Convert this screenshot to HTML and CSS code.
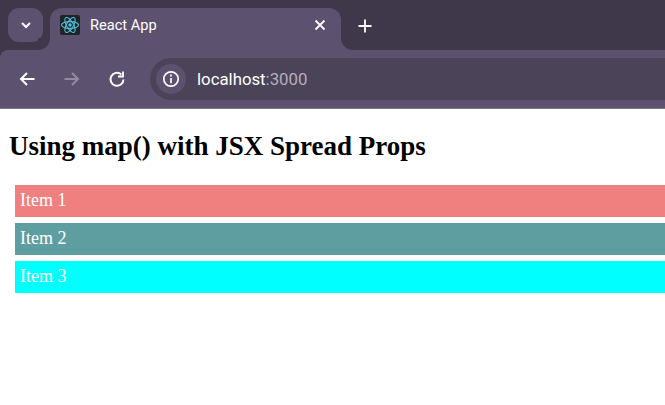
FILE: index.html
```html
<!DOCTYPE html>
<html lang="en">
<head>
    <meta charset="UTF-8">
    <title>React App</title>
    <link rel="stylesheet" href="styles.css">
</head>
<body>
    <div class="browser-top">
        <div class="tabstrip">
            <button class="tab-search">
                <svg width="12" height="12" viewBox="0 0 12 12"><path d="M2 4l4 4 4-4" fill="none" stroke="#fff" stroke-width="2"/></svg>
            </button>
            <div class="tab">
                <span class="favicon">
                    <svg width="20" height="20" viewBox="0 0 20 20" fill="none" stroke="#4fc3dc" stroke-width="1.1">
                        <ellipse cx="10" cy="10" rx="8.5" ry="3.4"/>
                        <ellipse cx="10" cy="10" rx="8.5" ry="3.4" transform="rotate(60 10 10)"/>
                        <ellipse cx="10" cy="10" rx="8.5" ry="3.4" transform="rotate(120 10 10)"/>
                        <circle cx="10" cy="10" r="1.7" fill="#4fc3dc" stroke="none"/>
                    </svg>
                </span>
                <span class="tab-title">React App</span>
                <svg class="tab-close" width="12" height="12" viewBox="0 0 12 12"><path d="M1.5 1.5l9 9M10.5 1.5l-9 9" stroke="#fff" stroke-width="1.8"/></svg>
            </div>
            <svg class="new-tab" width="14" height="14" viewBox="0 0 14 14"><path d="M7 0.5v13M0.5 7h13" stroke="#fff" stroke-width="1.8"/></svg>
        </div>
        <div class="toolbar">
            <svg class="nav-icon" width="18" height="18" viewBox="0 0 18 18" fill="none" stroke="#fff" stroke-width="2"><path d="M16.5 9H3M9 3L3 9l6 6"/></svg>
            <svg class="nav-icon" width="18" height="18" viewBox="0 0 18 18" fill="none" stroke="#948ba0" stroke-width="2"><path d="M1.5 9H15M9 3l6 6-6 6"/></svg>
            <svg class="nav-icon" width="18" height="18" viewBox="0 0 18 18" fill="none" stroke="#fff" stroke-width="2"><path d="M15.5 9.5A6.5 6.5 0 1 1 13.3 4.4"/><path d="M15 1.5v5h-5" stroke-width="1.8"/></svg>
            <div class="omnibox">
                <span class="site-info">
                    <svg width="18" height="18" viewBox="0 0 18 18" fill="none" stroke="#fff" stroke-width="1.7"><circle cx="9" cy="9" r="7.2"/><path d="M9 8v5.2"/><path d="M9 4.6v1.8"/></svg>
                </span>
                <span class="url">localhost<span class="port">:3000</span></span>
            </div>
        </div>
    </div>

    <div class="page">
        <h2>Using map() with JSX Spread Props</h2>
        <div class="item-list">
            <div class="item item-red">Item 1</div>
            <div class="item item-teal">Item 2</div>
            <div class="item item-cyan">Item 3</div>
        </div>
    </div>
</body>
</html>
```

FILE: styles.css
```css
html, body {
    margin: 0;
    height: 100%;
    overflow: hidden;
    background-color: #fff;
}
.browser-top {
    height: 109px;
    background-color: #3f374a;
    font-family: "Open Sans", Roboto, sans-serif;
    color: #fff;
}
.tabstrip {
    height: 50px;
    display: flex;
    align-items: flex-end;
    padding-left: 8px;
}
.tab-search {
    width: 35px;
    height: 34px;
    margin-bottom: 8px;
    border: none;
    border-radius: 11px;
    background-color: #5c516f;
    display: flex;
    align-items: center;
    justify-content: center;
    padding: 0;
}
.tab {
    position: relative;
    width: 291px;
    height: 42px;
    margin-left: 7px;
    padding: 0 15px 8px 10px;
    box-sizing: border-box;
    background-color: #5c516f;
    border-radius: 12px 12px 0 0;
    display: flex;
    align-items: center;
}
/* curved feet of the active tab */
.tab::before, .tab::after {
    content: "";
    position: absolute;
    bottom: 0;
    width: 12px;
    height: 12px;
}
.tab::before {
    left: -12px;
    background: radial-gradient(circle at 0 0, #3f374a 11.5px, #5c516f 12.5px);
}
.tab::after {
    right: -12px;
    background: radial-gradient(circle at 100% 0, #3f374a 11.5px, #5c516f 12.5px);
}
.favicon {
    width: 20px;
    height: 20px;
    background-color: #20232a;
    border-radius: 2px;
    display: flex;
}
.tab-title {
    flex: 1;
    margin-left: 10px;
    font-family: Roboto, sans-serif;
    font-size: 14.6px;
}
.new-tab {
    margin: 0 0 17px 17px;
    align-self: flex-end;
}
.toolbar {
    height: 59px;
    display: flex;
    align-items: center;
    padding: 0 0 1px 18px;
    background-color: #5c516f;
    border-bottom: 1px solid #7d7390;
    border-top-left-radius: 8px;
    box-sizing: border-box;
}
.nav-icon {
    margin-right: 27px;
}
.omnibox {
    flex: 1;
    height: 42px;
    margin-left: -3px;
    padding-left: 6px;
    background-color: #4b4358;
    border-radius: 21px 0 0 21px;
    display: flex;
    align-items: center;
}
.site-info {
    width: 30px;
    height: 30px;
    border-radius: 50%;
    background-color: #5c516f;
    display: flex;
    align-items: center;
    justify-content: center;
}
.url {
    margin-left: 11px;
    font-family: Roboto, sans-serif;
    font-size: 16.8px;
}
.port {
    color: #b5aec0;
}
.page {
    font-family: "Liberation Serif", serif;
    color: #000;
    padding-top: 1px;
}
h2 {
    margin: 20px 0 23px 9px;
    font-size: 27px;
    line-height: 32px;
}
.item-list {
    padding-left: 15px;
}
.item {
    height: 32px;
    line-height: 31px;
    margin-bottom: 6px;
    padding-left: 5px;
    font-size: 18px;
    color: #fff;
}
.item-red {
    background-color: #f08080;
}
.item-teal {
    background-color: #5f9ea0;
}
.item-cyan {
    background-color: #00ffff;
}
```
